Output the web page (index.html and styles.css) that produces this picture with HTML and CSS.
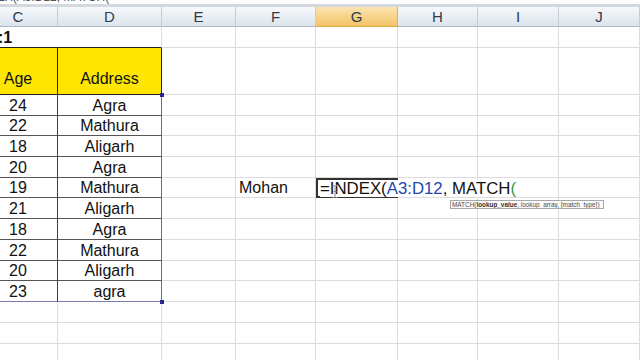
FILE: index.html
```html
<!DOCTYPE html>
<html>
<head>
<meta charset="utf-8">
<link rel="stylesheet" href="styles.css">
</head>
<body>
<div class="strip"><div class="strip-text">=INDEX(A3:D12, MATCH(</div></div>
<div class="sheet">
  <div class="h">C</div><div class="h">D</div><div class="h">E</div><div class="h">F</div><div class="h sel">G</div><div class="h">H</div><div class="h">I</div><div class="h">J</div>

  <div class="g r1c"><span class="title">:1</span></div><div class="g r1d"></div><div class="g"></div><div class="g"></div><div class="g"></div><div class="g"></div><div class="g"></div><div class="g"></div>

  <div class="g yc">Age</div><div class="g yd">Address</div><div class="g"></div><div class="g"></div><div class="g"></div><div class="g"></div><div class="g"></div><div class="g"></div>

  <div class="g dc">24</div><div class="g dd first">Agra</div><div class="g"></div><div class="g"></div><div class="g"></div><div class="g"></div><div class="g"></div><div class="g"></div>
  <div class="g dc">22</div><div class="g dd">Mathura</div><div class="g"></div><div class="g"></div><div class="g"></div><div class="g"></div><div class="g"></div><div class="g"></div>
  <div class="g dc">18</div><div class="g dd">Aligarh</div><div class="g"></div><div class="g"></div><div class="g"></div><div class="g"></div><div class="g"></div><div class="g"></div>
  <div class="g dc">20</div><div class="g dd">Agra</div><div class="g"></div><div class="g"></div><div class="g"></div><div class="g"></div><div class="g"></div><div class="g"></div>
  <div class="g dc">19</div><div class="g dd">Mathura</div><div class="g"></div><div class="g name">Mohan</div>
  <div class="g edit">
    <span class="ftext">=INDEX(<span class="ref">A3:D12</span>, MATCH<span class="paren">(</span></span>
    <svg class="ibeam" width="6" height="13" viewBox="0 0 6 13"><path d="M0.5 0.5h2M3.5 0.5h2M3 1v11M0.5 12.5h2M3.5 12.5h2M1.5 6.5h3" stroke="#8a8a8a" stroke-width="1" fill="none"/></svg>
    <div class="tip">MATCH(<b>lookup_value</b>, lookup_array, [match_type])</div>
  </div>
  <div class="g"></div><div class="g"></div><div class="g"></div>
  <div class="g dc">21</div><div class="g dd">Aligarh</div><div class="g"></div><div class="g"></div><div class="g"></div><div class="g"></div><div class="g"></div><div class="g"></div>
  <div class="g dc">18</div><div class="g dd">Agra</div><div class="g"></div><div class="g"></div><div class="g"></div><div class="g"></div><div class="g"></div><div class="g"></div>
  <div class="g dc">22</div><div class="g dd">Mathura</div><div class="g"></div><div class="g"></div><div class="g"></div><div class="g"></div><div class="g"></div><div class="g"></div>
  <div class="g dc">20</div><div class="g dd">Aligarh</div><div class="g"></div><div class="g"></div><div class="g"></div><div class="g"></div><div class="g"></div><div class="g"></div>
  <div class="g dc last">23</div><div class="g dd last">agra</div><div class="g"></div><div class="g"></div><div class="g"></div><div class="g"></div><div class="g"></div><div class="g"></div>

  <div class="g"></div><div class="g"></div><div class="g"></div><div class="g"></div><div class="g"></div><div class="g"></div><div class="g"></div><div class="g"></div>
  <div class="g"></div><div class="g"></div><div class="g"></div><div class="g"></div><div class="g"></div><div class="g"></div><div class="g"></div><div class="g"></div>
  <div class="g"></div><div class="g"></div><div class="g"></div><div class="g"></div><div class="g"></div><div class="g"></div><div class="g"></div><div class="g"></div>
</div>
</body>
</html>
```
FILE: styles.css
```css
* { box-sizing: border-box; }
html, body { margin: 0; height: 100%; overflow: hidden; background: #fff; }
body { font-family: "Liberation Sans", Arial, sans-serif; }

.strip {
  height: 7px;
  border-bottom: 3px solid #d4d9e0;
  overflow: hidden;
}
.strip-text {
  font-size: 12px;
  line-height: 12px;
  margin-top: -9px;
  margin-left: -31px;
  color: #555;
  white-space: nowrap;
}

.sheet {
  display: grid;
  grid-template-columns: 79px 104px 74px 80px 82px 80px 81px 81px;
  grid-template-rows: 20px 21px 47px repeat(10, 20.7px) repeat(3, 21px);
  margin-left: -21px;
  width: 661px;
}

.h {
  background: linear-gradient(#f6f8fb, #dde4ed);
  border-right: 1px solid #c5cdd8;
  border-bottom: 1px solid #a9b9cb;
  display: flex;
  align-items: center;
  justify-content: center;
  font-size: 15px;
  color: #2f3a48;
}
.h.sel {
  background: linear-gradient(#fbe3b0, #f3c466);
  border-right-color: #e0b25a;
  border-bottom-color: #d8a64c;
}

.g {
  border-right: 1px solid #dcdcdc;
  border-bottom: 1px solid #dcdcdc;
  font-size: 16px;
  line-height: 18px;
  display: flex;
  align-items: flex-end;
  justify-content: center;
  color: #111;
  white-space: nowrap;
}

.r1c {
  border-right: none;
  border-bottom: 1px solid #222;
  justify-content: flex-start;
  align-items: center;
  overflow: hidden;
}
.r1d { border-bottom: 1px solid #222; }
.title {
  font-weight: bold;
  margin-left: 19px;
  margin-top: 2px;
}

.yc, .yd {
  background: #fee600;
  border-right: 1px solid #222;
  border-bottom: 1px solid #222;
  padding-bottom: 6px;
}

.dc {
  border-right: 1px solid #3e3e3e;
  border-bottom: 1px solid #555;
}
.dd {
  border-right: 1px solid #6565b8;
  border-bottom: 1px solid #555;
  position: relative;
}
.dc.last, .dd.last { border-bottom-color: #7b7bad; }

.dd.first::after,
.dd.last::after {
  content: "";
  position: absolute;
  right: -3px;
  width: 4px;
  height: 4px;
  background: #2a2a8a;
}
.dd.first::after { top: -2px; }
.dd.last::after { bottom: -3px; }

.name {
  justify-content: flex-start;
  padding-left: 3px;
}

.edit {
  position: relative;
  z-index: 2;
  border: 2px solid #333;
  justify-content: flex-start;
  align-items: flex-end;
  padding-left: 2px;
  overflow: visible;
}
.ftext {
  font-size: 16.8px;
  line-height: 17px;
  background: #fff;
  color: #111;
  margin-bottom: -1px;
}
.ref { color: #1f47ad; }
.paren { color: #2f9a3e; }

.ibeam {
  position: absolute;
  left: 14px;
  top: 5px;
}

.tip {
  position: absolute;
  left: 132px;
  top: 20px;
  width: 154px;
  height: 9px;
  border: 1px solid #a8a8a8;
  background: #fbfbfb;
  font-size: 6.4px;
  line-height: 7px;
  color: #4a4a4a;
  padding-left: 1px;
  white-space: nowrap;
  overflow: hidden;
}
.tip b { color: #333; }
```
